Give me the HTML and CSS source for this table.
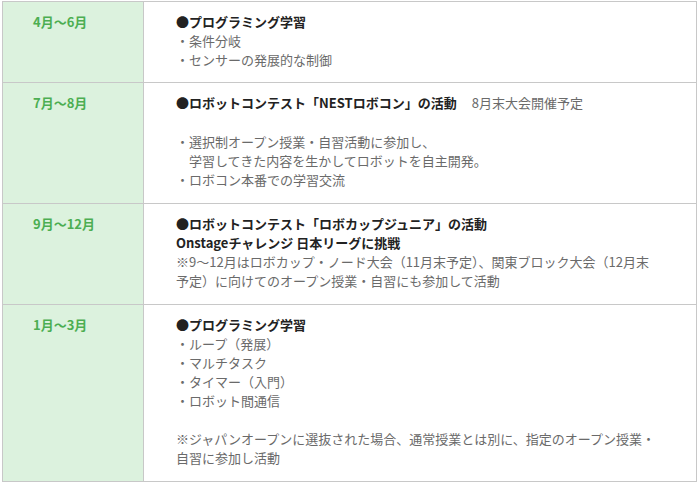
FILE: index.html
```html
<!DOCTYPE html>
<html lang="ja">
<head>
<meta charset="utf-8">
<link rel="stylesheet" href="styles.css">
</head>
<body>
<table class="schedule">
  <tr>
    <th class="term">4月〜6月</th>
    <td class="detail">
      <p class="title">●プログラミング学習</p>
      <p class="note">・条件分岐<br>・センサーの発展的な制御</p>
    </td>
  </tr>
  <tr>
    <th class="term">7月〜8月</th>
    <td class="detail">
      <p class="title">●ロボットコンテスト「NESTロボコン」の活動<span class="aside">8月末大会開催予定</span></p>
      <p class="note gap wide">・選択制オープン授業・自習活動に参加し、<br>　学習してきた内容を生かしてロボットを自主開発。<br>・ロボコン本番での学習交流</p>
    </td>
  </tr>
  <tr>
    <th class="term">9月〜12月</th>
    <td class="detail">
      <p class="title">●ロボットコンテスト「ロボカップジュニア」の活動<br>Onstageチャレンジ 日本リーグに挑戦</p>
      <p class="note">※9〜12月はロボカップ・ノード大会（11月末予定）、関東ブロック大会（12月末<br>予定）に向けてのオープン授業・自習にも参加して活動</p>
    </td>
  </tr>
  <tr>
    <th class="term">1月〜3月</th>
    <td class="detail">
      <p class="title">●プログラミング学習</p>
      <p class="note">・ループ（発展）<br>・マルチタスク<br>・タイマー（入門）<br>・ロボット間通信</p>
      <p class="note gap">※ジャパンオープンに選抜された場合、通常授業とは別に、指定のオープン授業・<br>自習に参加し活動</p>
    </td>
  </tr>
</table>
</body>
</html>
```
FILE: styles.css
```css
html, body {
  margin: 0;
  padding: 0;
  background: #fff;
}
body {
  padding: 1px 2px 0 2px;
  font-family: "Noto Sans CJK JP", "Noto Sans", sans-serif;
  font-size: 13px;
  line-height: 19px;
}
.schedule {
  border-collapse: collapse;
  width: 695px;
}
.schedule th, .schedule td {
  border: 1px solid #c8c8c8;
  vertical-align: top;
  text-align: left;
}
.term {
  width: 110px;
  background: #dcf2de;
  color: #4cae52;
  font-weight: 700;
  padding: 10px 0 14px 30px;
}
.detail {
  padding: 10px 30px 14px 32px;
  color: #6a6a6a;
}
.schedule tr:first-child .term,
.schedule tr:first-child .detail {
  padding-bottom: 13px;
}
.title {
  margin: 0;
  color: #222;
  font-weight: 700;
}
.aside {
  color: #6a6a6a;
  font-weight: 400;
  margin-left: 15px;
}
.note {
  margin: 0;
}
.note.gap {
  margin-top: 19px;
}
.note.gap.wide {
  margin-top: 20px;
}
```
